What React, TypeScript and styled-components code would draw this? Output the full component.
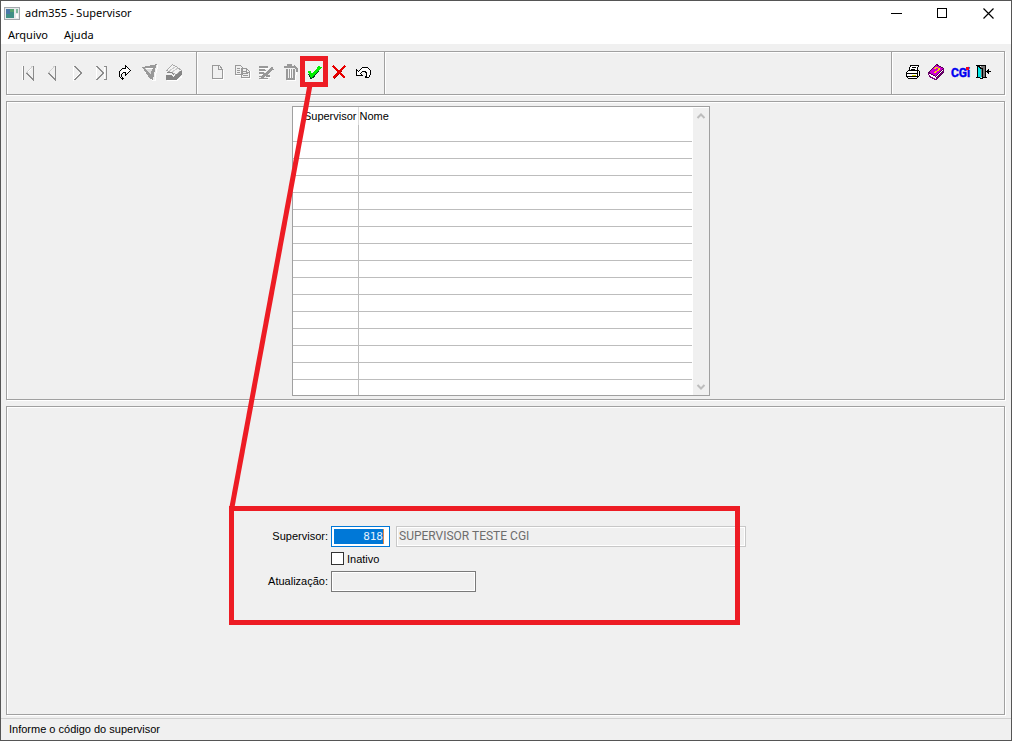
import React from "react";
import styled, { createGlobalStyle, css } from "styled-components";

const face = "#f0f0f0";
const shade = "#a0a0a0";
const red = "#ed1c24";
const uiFont = '"Liberation Sans", Arial, sans-serif';
const fieldFont = 'Roboto, "Liberation Sans", sans-serif';

const GlobalStyle = createGlobalStyle`
  * { box-sizing: border-box; }
  body { margin: 0; background: ${face}; }
`;

const etched = css`
  border: 1px solid ${shade};
  box-shadow: 1px 1px 0 #fff, inset 1px 1px 0 #fff;
`;

const Window = styled.div`
  position: relative;
  display: flex;
  flex-direction: column;
  min-height: 100vh;
  border: 1px solid #555;
  background: ${face};
  color: #000;
  font: 11px/16px ${uiFont};
`;

const TitleBar = styled.header`
  display: flex;
  align-items: center;
  height: 25px;
  padding-left: 3px;
  background: #fff;
  font: 11px/16px "Noto Sans", sans-serif;
`;

const Title = styled.h1`
  flex: 1;
  margin: 0 0 0 5px;
  padding-bottom: 2px;
  font: inherit;
`;

const WindowButton = styled.button`
  width: 46px;
  height: 24px;
  padding: 0;
  border: 0;
  background: transparent;
  display: grid;
  place-items: center;
`;

const MenuBar = styled.nav`
  display: flex;
  gap: 16px;
  height: 18px;
  padding-left: 7px;
  background: #fff;
`;

const MenuItem = styled.button`
  padding: 0;
  border: 0;
  background: transparent;
  color: #000;
  height: 18px;
  font: 11px/18px "Noto Sans", sans-serif;
`;

const Content = styled.main`
  flex: 1;
  display: flex;
  flex-direction: column;
  gap: 6px;
  padding: 7px 6px 3px 5px;
`;

const Toolbar = styled.div`
  ${etched}
  display: flex;
  height: 44px;
`;

const ToolGroup = styled.div<{ $grow?: boolean; $first?: boolean; $last?: boolean }>`
  display: flex;
  align-items: center;
  flex: ${(p) => (p.$grow ? "1" : "none")};
  padding: 0 ${(p) => (p.$last ? 8 : p.$first ? 12 : 11)}px 2px ${(p) => (p.$first ? 9 : 8)}px;
  border-right: ${(p) => (p.$last ? "0" : `1px solid ${shade}`)};
  box-shadow: inset 1px 0 0 #fff;
`;

const ToolButton = styled.button`
  position: relative;
  width: 24px;
  height: 24px;
  padding: 0;
  border: 0;
  background: transparent;

  svg { display: block; }
`;

const ButtonMark = styled.span`
  position: absolute;
  z-index: 2;
  inset: -4px -3px -3px -1px;
  border: 5px solid ${red};
`;

const ListPanel = styled.section`
  ${etched}
  display: flex;
  justify-content: center;
  padding: 4px 10px 3px 0;
`;

const ListBox = styled.div`
  display: flex;
  width: 418px;
  height: 290px;
  border: 1px solid ${shade};
  background: #fff;
`;

const Grid = styled.table`
  flex: 1;
  table-layout: fixed;
  border-collapse: separate;
  border-spacing: 0;

  th, td { padding: 0; }
  th {
    height: 18px;
    padding-left: 1px;
    font-weight: 400;
    line-height: 18px;
    text-align: left;
    white-space: nowrap;
  }
  th:first-child {
    width: 66px;
    padding: 0 1px 0 0;
    border-right: 1px solid #dcdcdc;
    text-align: right;
  }
  td { height: 17px; border-bottom: 1px solid #bdbdbd; }
  td:first-child { border-right: 1px solid #bdbdbd; }
  tr:last-child td { height: 15px; border-bottom: 0; }
`;

const ScrollBar = styled.div`
  display: flex;
  flex-direction: column;
  justify-content: space-between;
  width: 16px;
  margin: 1px 0 0 1px;
  background: ${face};
`;

const ScrollButton = styled.button`
  height: 16px;
  padding: 0;
  border: 0;
  background: transparent;
  display: grid;
  place-items: center;
`;

const FormPanel = styled.section`
  ${etched}
  flex: 1;
  display: grid;
  place-items: center;
  padding-bottom: 4px;
`;

const Form = styled.form`
  position: relative;
  display: grid;
  grid-template-columns: 63px 415px;
  grid-template-rows: 21px 24px 21px;
  column-gap: 3px;
  align-items: center;
`;

const FieldLabel = styled.label`
  text-align: right;
  white-space: nowrap;
`;

const Fields = styled.div`
  grid-column: 2;
  display: flex;
  align-items: center;
  gap: 6px;
`;

const CodeFrame = styled.div`
  width: 59px;
  height: 21px;
  padding: 2px;
  border: 1px solid #0078d7;
  background: #fff;
`;

const CodeInput = styled.input`
  display: block;
  width: 50px;
  height: 15px;
  padding: 0;
  border: 0;
  border-right: 1px solid #e08a4a;
  border-radius: 0;
  outline: 0;
  background: #0078d7;
  color: #e4f1fc;
  font: 11px/15px "DejaVu Sans Mono", monospace;
  text-align: right;
`;

const TextInput = styled.input<{ $width: number; $line: string }>`
  width: ${(p) => p.$width}px;
  height: 21px;
  padding: 0 2px;
  border: 1px solid ${(p) => p.$line};
  border-radius: 0;
  box-shadow: inset 0 0 0 1px #fff;
  background: ${face};
  color: #6d6d6d;
  font: 12px/16px ${fieldFont};
`;

const CheckLabel = styled.label`
  display: flex;
  align-items: center;
  gap: 3px;
`;

const Check = styled.input`
  appearance: none;
  width: 13px;
  height: 13px;
  margin: 0;
  border: 1px solid #333;
  background: #fff;
`;

const FormMark = styled.div`
  position: absolute;
  inset: -20px 6px -33px -36px;
  border: 5px solid ${red};
  pointer-events: none;
`;

const Connector = styled.svg`
  position: absolute;
  top: 0;
  left: 0;
  z-index: 1;
  pointer-events: none;
`;

const StatusBar = styled.footer`
  height: 22px;
  padding-left: 8px;
  border-top: 1px solid #d0d0d0;
  line-height: 20px;
`;

const G = "#8c8c8c";

const Icon = ({ children }: { children: React.ReactNode }) => (
  <svg width="24" height="24" viewBox="0 0 24 24" fill="none" shapeRendering="crispEdges" aria-hidden="true">
    {children}
  </svg>
);

const icons: Record<string, React.ReactNode> = {
  first: (
    <Icon>
      <path d="M6.500 6v14M17 6l-6 7" stroke="#fff" />
      <path d="M7.500 6v14M17.500 6v14l-7-7" stroke={G} />
      <path d="M16.500 6l-6 7" stroke="#d0d0d0" />
    </Icon>
  ),
  prev: (
    <Icon>
      <path d="M14.500 6l-6 7" stroke="#d0d0d0" />
      <path d="M15.500 6v14l-7-7" stroke={G} />
    </Icon>
  ),
  next: (
    <Icon>
      <path d="M9.500 6v14l7-7" stroke="#fff" />
      <path d="M10.500 6l7 7l-7 7" stroke={G} />
    </Icon>
  ),
  last: (
    <Icon>
      <path d="M8.500 6v14M16.500 6v14" stroke="#fff" />
      <path d="M8.500 6l7 7l-7 7M18.500 6v14" stroke={G} />
      <path d="M16 6.500h2M16 19.500h2" stroke={G} />
    </Icon>
  ),
  redo: (
    <Icon>
      <path d="M8 15l2-3h5v3l3-4l-4-4v2h-3l-3 3z" fill="#fff" />
      <path d="M13.500 8.500v-3l5 5l-5 5v-3h-2l-2 2v2l1 1v2" stroke="#000" />
      <path d="M13.500 8.500h-3l-3 3v5l2 2h2" stroke="#000" />
    </Icon>
  ),
  filter: (
    <Icon>
      <path d="M8 10l8 10h3v-3l3-12" stroke="#fff" />
      <path d="M6 7l15-3l-2 5l-2 11l-3-1z" fill="#999" />
      <path d="M9 8l6 7l1-7z" fill="#ddd" />
      <path d="M10 8.500h7" stroke="#fff" />
    </Icon>
  ),
  open: (
    <Icon>
      <path d="M7 20.500h10l5-4" stroke="#fff" />
      <path d="M6.500 10.500l6-6l5 3l4 3l-5 4l-5-2z" fill="#f4f4f4" stroke="#aaa" />
      <path d="M9 11l6-4M12 12l6-4" stroke="#ccc" />
      <path d="M6 15h5l2 2l8-6h1v3l-6 6H6z" fill="#858585" />
      <path d="M7 12.500h4l3 2" stroke="#858585" />
    </Icon>
  ),
  create: (
    <Icon>
      <path d="M8 19.500h10.500V10" stroke="#fff" />
      <path d="M7.500 5.500h7l3 4v9h-10zM13.500 5.500v4h4" stroke="#999" />
    </Icon>
  ),
  copy: (
    <Icon>
      <path d="M13 18.500h8.500V11M7 15.500h5" stroke="#fff" />
      <path d="M6.500 5.500h5l2 2v7h-7zM12.500 8.500h5l3 3v6h-8z" fill={face} stroke="#999" />
      <path d="M8 8.500h3M8 10.500h3M8 12.500h3M14 11.500h3M14 13.500h5M14 15.500h5M17.500 9v3h3" stroke="#999" />
    </Icon>
  ),
  edit: (
    <Icon>
      <path d="M7 8.500h9M7 11.500h6M7 14.500h3M14 17.500h4M7 19.500h9" stroke="#fff" />
      <path d="M6 7.500h9M6 10.500h7M6 13.500h5M6 16.500h2M13 15.500h4M6 18.500h9" stroke="#999" />
      <path d="M6 6.500h9M6 9.500h6M6 12.500h5M13 16.500h4" stroke="#999" />
      <path d="M20 8l-8 7l-4 3" stroke="#999" strokeWidth="3" />
    </Icon>
  ),
  trash: (
    <Icon>
      <path d="M10 20.500h8.500l1-10" stroke="#fff" />
      <path d="M7 6.500h11M10 5h5M17 6l3 3v3" stroke="#999" strokeWidth="2" />
      <path d="M9.500 9v10h7v-10" stroke="#999" strokeWidth="2" />
      <path d="M12.500 9v9M14.500 9v9" stroke="#999" />
      <path d="M13.500 9v9" stroke="#fff" />
    </Icon>
  ),
  confirm: (
    <Icon>
      <path d="M8 14l2 4l2-1l8-10" stroke="#004020" strokeWidth="2" />
      <path d="M8 11l2.500 5l9-9.500" stroke="#00f000" strokeWidth="3" />
    </Icon>
  ),
  cancel: (
    <Icon>
      <path d="M9 7l11 11M20 7l-11 12" stroke="#a00" />
      <path d="M8 6l12 12M20 6l-12 12" stroke="#e80000" strokeWidth="2" />
    </Icon>
  ),
  undo: (
    <Icon>
      <path d="M7.500 9.500v6h6l-2-2l2-2h3l1 2v2l-1 2h3l2-3v-4l-3-3h-5l-4 4z" fill="#fff" stroke="#000" />
    </Icon>
  ),
  print: (
    <Icon>
      <path d="M10.500 5.500h8l-2 6h-8z" fill="#fff" stroke="#000" />
      <path d="M12 7.500h4M11 9.500h4" stroke="#000" />
      <path d="M6.500 12.500l2-2h10l1 1v4l-3 3h-8l-2-2z" fill="#fff" stroke="#000" />
      <path d="M7 13.500h10M7 16.500h10M17.500 11v6" stroke="#000" />
      <path d="M12 15.500h4" stroke="#dddd00" />
    </Icon>
  ),
  help: (
    <Icon>
      <path d="M4.500 13.500l1 3l6 3l8-8v-3z" fill="#fff" stroke="#707" />
      <path d="M4.500 12.500l8-8l7 4l-8 8z" fill="#d000d0" stroke="#505" />
      <path d="M12 20l8-8M12 18l8-8" stroke="#505" />
      <path d="M10.500 8.500l2-1l3 1l-1 2l-3 1M9.500 12.500h2" stroke="#f4e000" />
    </Icon>
  ),
  cgi: (
    <Icon>
      <text
        x="3"
        y="17"
        fill="#0000f0"
        stroke="#0000f0"
        strokeWidth="0.400"
        fontFamily='Roboto, "Liberation Sans", sans-serif'
        fontWeight="700"
        fontSize="12"
      >
        CGi
      </text>
      <path d="M18 7h3v3h-3z" fill="#f00020" />
    </Icon>
  ),
  exit: (
    <Icon>
      <path d="M4 5.500h10M4 17.500h3M11 17.500h4" stroke="#000" />
      <path d="M5.500 6v11M13.500 5v13" stroke="#000" />
      <path d="M9 6h4v11H9z" fill="#777" />
      <path d="M6 7l3 2v10l-3-2z" fill="#00e8e8" />
      <path d="M6 6.500h1l2 2h1v10h-1l-2-1" stroke="#000" />
      <path d="M14 11.500h5M15.500 10v3M16.500 9v5" stroke="#000" />
    </Icon>
  ),
};

type Tool = { icon: string; label: string; marked?: boolean };

const navTools: Tool[] = [
  { icon: "first", label: "Primeiro" },
  { icon: "prev", label: "Anterior" },
  { icon: "next", label: "Próximo" },
  { icon: "last", label: "Último" },
  { icon: "redo", label: "Ir para" },
  { icon: "filter", label: "Filtrar" },
  { icon: "open", label: "Abrir" },
];

const editTools: Tool[] = [
  { icon: "create", label: "Novo" },
  { icon: "copy", label: "Copiar" },
  { icon: "edit", label: "Alterar" },
  { icon: "trash", label: "Excluir" },
  { icon: "confirm", label: "Confirmar", marked: true },
  { icon: "cancel", label: "Cancelar" },
  { icon: "undo", label: "Desfazer" },
];

const systemTools: Tool[] = [
  { icon: "print", label: "Imprimir" },
  { icon: "help", label: "Manual" },
  { icon: "cgi", label: "CGI" },
  { icon: "exit", label: "Sair" },
];

const Tools = ({ items }: { items: Tool[] }) => (
  <>
    {items.map((t) => (
      <ToolButton key={t.icon} type="button" aria-label={t.label}>
        {icons[t.icon]}
        {t.marked && <ButtonMark />}
      </ToolButton>
    ))}
  </>
);

const AppIcon = () => (
  <svg width="16" height="14" viewBox="0 0 16 14" shapeRendering="crispEdges" aria-hidden="true">
    <path d="M.5 .5h15v12H.5z" fill="#e8eaec" stroke="#a4a8ac" />
    <path d="M2 2h8v9H2z" fill="#3f8f86" />
    <path d="M2 2h4v5H2z" fill="#4a78a8" />
    <path d="M6 2h4v3H6z" fill="#55a070" />
    <path d="M12 2h2v4h-2z" fill="#7fb8a0" />
    <path d="M12 7h2v4h-2z" fill="#fff" />
  </svg>
);

const Chevron = ({ down }: { down?: boolean }) => (
  <svg width="10" height="8" viewBox="0 0 10 8" fill="none" aria-hidden="true">
    <path d={down ? "M1.500 2l3.500 3.500l3.500-3.500" : "M1.500 6l3.500-3.500l3.500 3.500"} stroke="#bdbdbd" strokeWidth="2" />
  </svg>
);

export default function App() {
  return (
    <Window>
      <GlobalStyle />
      <TitleBar>
        <AppIcon />
        <Title>adm355 - Supervisor</Title>
        <WindowButton type="button" aria-label="Minimizar">
          <svg width="11" height="11" shapeRendering="crispEdges"><path d="M0 5.500h11" stroke="#000" /></svg>
        </WindowButton>
        <WindowButton type="button" aria-label="Maximizar">
          <svg width="11" height="11" shapeRendering="crispEdges"><path d="M.5 .5h9v9h-9z" fill="none" stroke="#000" /></svg>
        </WindowButton>
        <WindowButton type="button" aria-label="Fechar">
          <svg width="11" height="11"><path d="M.5 .5l10 10M10.500 .5l-10 10" stroke="#000" strokeWidth="1.200" /></svg>
        </WindowButton>
      </TitleBar>
      <MenuBar>
        <MenuItem type="button">Arquivo</MenuItem>
        <MenuItem type="button">Ajuda</MenuItem>
      </MenuBar>
      <Content>
        <Toolbar>
          <ToolGroup $first><Tools items={navTools} /></ToolGroup>
          <ToolGroup><Tools items={editTools} /></ToolGroup>
          <ToolGroup $grow />
          <ToolGroup $last><Tools items={systemTools} /></ToolGroup>
        </Toolbar>
        <ListPanel>
          <ListBox>
            <Grid>
              <thead>
                <tr>
                  <th scope="col">Supervisor</th>
                  <th scope="col">Nome</th>
                </tr>
              </thead>
              <tbody>
                {Array.from({ length: 16 }, (_, i) => (
                  <tr key={i}>
                    <td />
                    <td />
                  </tr>
                ))}
              </tbody>
            </Grid>
            <ScrollBar>
              <ScrollButton type="button" aria-label="Rolar para cima"><Chevron /></ScrollButton>
              <ScrollButton type="button" aria-label="Rolar para baixo"><Chevron down /></ScrollButton>
            </ScrollBar>
          </ListBox>
        </ListPanel>
        <FormPanel>
          <Form>
            <FieldLabel htmlFor="codigo">Supervisor:</FieldLabel>
            <Fields>
              <CodeFrame>
                <CodeInput id="codigo" defaultValue="818" />
              </CodeFrame>
              <TextInput $width={350} $line="#c8c8c8" aria-label="Nome" defaultValue="SUPERVISOR TESTE CGI" readOnly />
            </Fields>
            <Fields>
              <CheckLabel>
                <Check type="checkbox" />
                Inativo
              </CheckLabel>
            </Fields>
            <FieldLabel htmlFor="atualizacao">Atualização:</FieldLabel>
            <Fields>
              <TextInput id="atualizacao" $width={145} $line="#7a7a7a" readOnly />
            </Fields>
            <FormMark />
          </Form>
        </FormPanel>
      </Content>
      <StatusBar>Informe o código do supervisor</StatusBar>
      <Connector width="330" height="520" aria-hidden="true">
        <path d="M309 84L231 506" stroke={red} strokeWidth="5" />
      </Connector>
    </Window>
  );
}
